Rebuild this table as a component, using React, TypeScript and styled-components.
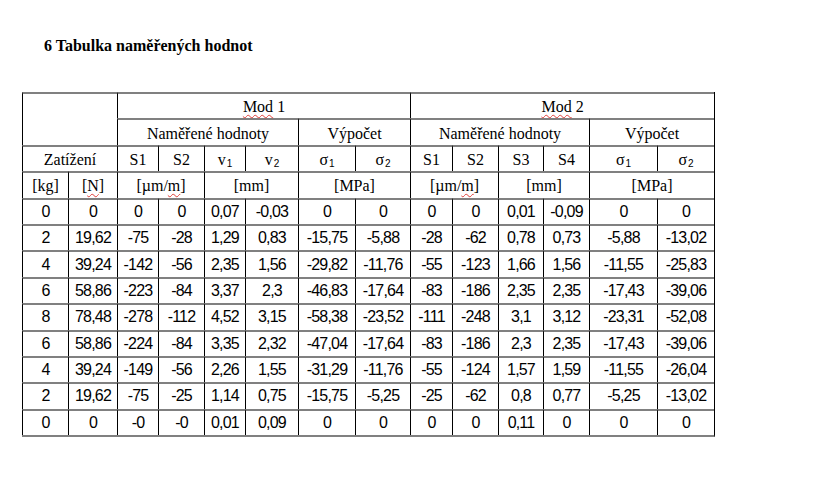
import React from 'react';
import styled, { createGlobalStyle } from 'styled-components';

const GlobalStyle = createGlobalStyle`
  html, body {
    margin: 0;
    padding: 0;
    background: #fff;
  }
`;

const Page = styled.div`
  width: 837px;
  height: 487px;
  padding: 37px 0 0 22px;
  box-sizing: border-box;
  background: #fff;
  color: #000;
`;

const Title = styled.h2`
  margin: 0 0 37px 22px;
  font-family: 'Liberation Serif', 'Times New Roman', serif;
  font-weight: 700;
  font-size: 16px;
  line-height: 18px;
`;

const Sheet = styled.table`
  border-collapse: separate;
  border-spacing: 0;
  table-layout: fixed;
  width: 693px;
  border-right: 1px solid #000;
  border-bottom: 2px solid #808080;
`;

const Col = styled.col<{ $w: number }>`
  width: ${(p) => p.$w}px;
`;

const Cell = styled.td<{ $serif?: boolean }>`
  box-sizing: border-box;
  height: 26.4px;
  padding: ${(p) => (p.$serif ? '2px 0 0' : '0')};
  border-top: 2px solid #808080;
  border-left: 1px solid #000;
  text-align: center;
  vertical-align: middle;
  white-space: nowrap;
  font-family: ${(p) =>
    p.$serif
      ? "'Liberation Serif', 'Times New Roman', serif"
      : "'Liberation Sans', Arial, sans-serif"};
  font-size: 16px;
  letter-spacing: ${(p) => (p.$serif ? '0' : '-0.8px')};
  line-height: 18px;
`;

const Sub = styled.sub`
  font-family: 'Liberation Sans', Arial, sans-serif;
  font-size: 10px;
  vertical-align: -2px;
  line-height: 0;
  margin-left: 1px;
`;

const Spell = styled.span`
  text-decoration: underline wavy #e0403a;
  text-decoration-thickness: 1px;
  text-underline-offset: 2px;
`;

const widths = [46, 49, 41, 46, 41, 53, 57, 55, 42, 46, 45, 46, 68, 57];

const rows: string[][] = [
  ['0', '0', '0', '0', '0,07', '-0,03', '0', '0', '0', '0', '0,01', '-0,09', '0', '0'],
  ['2', '19,62', '-75', '-28', '1,29', '0,83', '-15,75', '-5,88', '-28', '-62', '0,78', '0,73', '-5,88', '-13,02'],
  ['4', '39,24', '-142', '-56', '2,35', '1,56', '-29,82', '-11,76', '-55', '-123', '1,66', '1,56', '-11,55', '-25,83'],
  ['6', '58,86', '-223', '-84', '3,37', '2,3', '-46,83', '-17,64', '-83', '-186', '2,35', '2,35', '-17,43', '-39,06'],
  ['8', '78,48', '-278', '-112', '4,52', '3,15', '-58,38', '-23,52', '-111', '-248', '3,1', '3,12', '-23,31', '-52,08'],
  ['6', '58,86', '-224', '-84', '3,35', '2,32', '-47,04', '-17,64', '-83', '-186', '2,3', '2,35', '-17,43', '-39,06'],
  ['4', '39,24', '-149', '-56', '2,26', '1,55', '-31,29', '-11,76', '-55', '-124', '1,57', '1,59', '-11,55', '-26,04'],
  ['2', '19,62', '-75', '-25', '1,14', '0,75', '-15,75', '-5,25', '-25', '-62', '0,8', '0,77', '-5,25', '-13,02'],
  ['0', '0', '-0', '-0', '0,01', '0,09', '0', '0', '0', '0', '0,11', '0', '0', '0'],
];

const Strain = () => (
  <>
    [µm/<Spell>m</Spell>]
  </>
);

const ModHeader = ({ n }: { n: number }) => (
  <Cell $serif colSpan={6}>
    <Spell>Mod</Spell> {n}
  </Cell>
);

const App: React.FC = () => {
  return (
    <Page>
      <GlobalStyle />
      <Title>6 Tabulka naměřených hodnot</Title>
      <Sheet>
        <colgroup>
          {widths.map((w, i) => (
            <Col key={i} $w={w} />
          ))}
        </colgroup>
        <tbody>
          <tr>
            <Cell $serif rowSpan={2} colSpan={2} />
            <ModHeader n={1} />
            <ModHeader n={2} />
          </tr>
          <tr>
            <Cell $serif colSpan={4}>Naměřené hodnoty</Cell>
            <Cell $serif colSpan={2}>Výpočet</Cell>
            <Cell $serif colSpan={4}>Naměřené hodnoty</Cell>
            <Cell $serif colSpan={2}>Výpočet</Cell>
          </tr>
          <tr>
            <Cell $serif colSpan={2}>Zatížení</Cell>
            <Cell $serif>S1</Cell>
            <Cell $serif>S2</Cell>
            <Cell $serif>v<Sub>1</Sub></Cell>
            <Cell $serif>v<Sub>2</Sub></Cell>
            <Cell $serif>σ<Sub>1</Sub></Cell>
            <Cell $serif>σ<Sub>2</Sub></Cell>
            <Cell $serif>S1</Cell>
            <Cell $serif>S2</Cell>
            <Cell $serif>S3</Cell>
            <Cell $serif>S4</Cell>
            <Cell $serif>σ<Sub>1</Sub></Cell>
            <Cell $serif>σ<Sub>2</Sub></Cell>
          </tr>
          <tr>
            <Cell $serif>[kg]</Cell>
            <Cell $serif>[<Spell>N</Spell>]</Cell>
            <Cell $serif colSpan={2}><Strain /></Cell>
            <Cell $serif colSpan={2}>[mm]</Cell>
            <Cell $serif colSpan={2}>[MPa]</Cell>
            <Cell $serif colSpan={2}><Strain /></Cell>
            <Cell $serif colSpan={2}>[mm]</Cell>
            <Cell $serif colSpan={2}>[MPa]</Cell>
          </tr>
          {rows.map((r, i) => (
            <tr key={i}>
              {r.map((v, j) => (
                <Cell key={j}>{v}</Cell>
              ))}
            </tr>
          ))}
        </tbody>
      </Sheet>
    </Page>
  );
};

export default App;
